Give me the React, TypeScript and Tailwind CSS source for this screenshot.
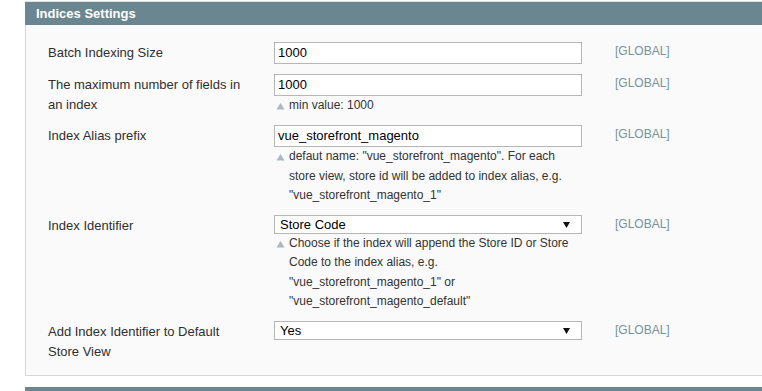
import React from 'react';

type Row = {
  label: string[];
  kind: 'input' | 'select';
  value: string;
  note?: string[];
};

const rows: Row[] = [
  { label: ['Batch Indexing Size'], kind: 'input', value: '1000' },
  {
    label: ['The maximum number of fields in', 'an index'],
    kind: 'input',
    value: '1000',
    note: ['min value: 1000'],
  },
  {
    label: ['Index Alias prefix'],
    kind: 'input',
    value: 'vue_storefront_magento',
    note: [
      'defaut name: "vue_storefront_magento". For each',
      'store view, store id will be added to index alias, e.g.',
      '"vue_storefront_magento_1"',
    ],
  },
  {
    label: ['Index Identifier'],
    kind: 'select',
    value: 'Store Code',
    note: [
      'Choose if the index will append the Store ID or Store',
      'Code to the index alias, e.g.',
      '"vue_storefront_magento_1" or',
      '"vue_storefront_magento_default"',
    ],
  },
  { label: ['Add Index Identifier to Default', 'Store View'], kind: 'select', value: 'Yes' },
];

const NoteArrow = () => (
  <svg width="9" height="8" viewBox="0 0 9 8" className="mt-[6px] shrink-0">
    <path d="M4.5 1 L8.5 7.5 L0.5 7.5 Z" fill="#a8b9bf" />
  </svg>
);

const SelectArrow = () => (
  <svg width="7" height="6" viewBox="0 0 7 6">
    <path d="M0 0 L7 0 L3.5 6 Z" fill="#111" />
  </svg>
);

const Field: React.FC<{ row: Row }> = ({ row }) => (
  <div className="flex items-start">
    <div className="mt-px w-[226px] shrink-0 text-[13px] leading-5 text-[#2f2f2f]">
      {row.label.map((l) => (
        <div key={l}>{l}</div>
      ))}
    </div>
    <div className="w-[308px] shrink-0">
      {row.kind === 'input' ? (
        <div className="h-[22px] border border-[#b6b6b6] bg-white px-[3px] text-[13px] leading-5 text-black">
          {row.value}
        </div>
      ) : (
        <div className="flex h-[19px] items-center justify-between border border-[#b6b6b6] bg-white pl-[5px] pr-[11px] text-[13px] text-black">
          <span>{row.value}</span>
          <SelectArrow />
        </div>
      )}
      {row.note && (
        <div className="flex gap-[4px] pl-[2px] text-[12px] leading-[19.3px] text-[#333]">
          <NoteArrow />
          <div>
            {row.note.map((n) => (
              <div key={n}>{n}</div>
            ))}
          </div>
        </div>
      )}
    </div>
    <div className="ml-[33px] mt-px text-[12px] leading-4 text-[#7592a0]">[GLOBAL]</div>
  </div>
);

const App: React.FC = () => {
  return (
    <div
      className="h-[391px] w-[762px] overflow-hidden bg-white pt-px"
      style={{ fontFamily: '"Liberation Sans", Arial, sans-serif' }}
    >
      <div className="ml-[25px]">
        <div className="h-[24px] border-t border-[#dbe3e6] bg-[#6a8791] pl-[11px] pt-px text-[13px] font-bold leading-[22px] text-white">
          Indices Settings
        </div>
        <div className="h-[351px] border-b border-l border-[#d6d6d6] bg-[#fafafa] pl-[22px] pt-[17px]">
          <div className="flex flex-col gap-[10px]">
            {rows.map((r) => (
              <Field key={r.label[0]} row={r} />
            ))}
          </div>
        </div>
        <div className="mt-[11px] h-[10px] bg-[#6a8791]" />
      </div>
    </div>
  );
};

export default App;
